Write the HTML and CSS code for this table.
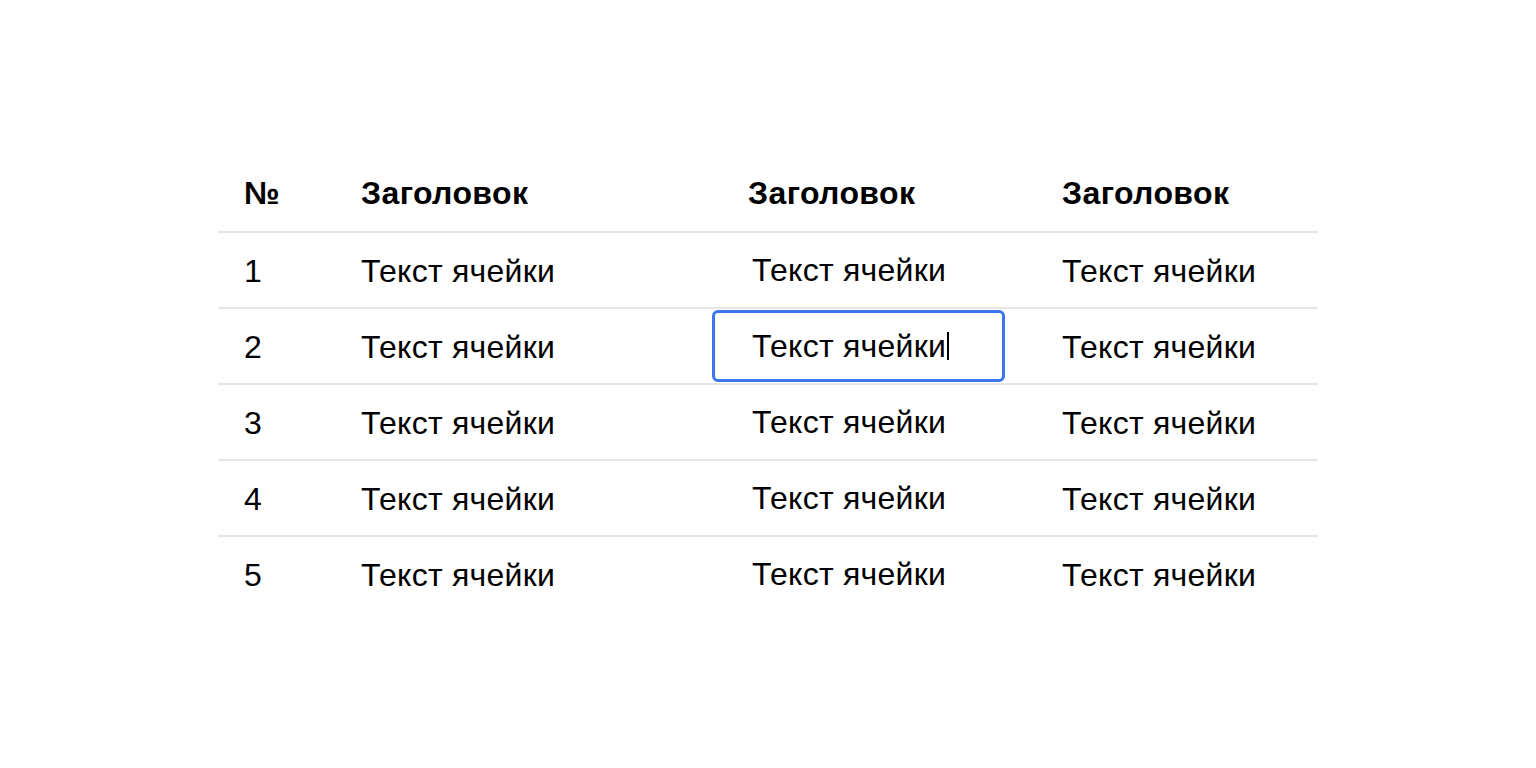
FILE: index.html
```html
<!DOCTYPE html>
<html lang="ru">
<head>
<meta charset="utf-8">
<title>Таблица</title>
<link rel="stylesheet" href="styles.css">
</head>
<body>
<main class="page">
  <table class="grid">
    <colgroup>
      <col class="c1"><col class="c2"><col class="c3"><col class="c4">
    </colgroup>
    <thead>
      <tr>
        <th>№</th><th>Заголовок</th><th>Заголовок</th><th>Заголовок</th>
      </tr>
    </thead>
    <tbody>
      <tr><td>1</td><td>Текст ячейки</td><td class="edit"><div class="box">Текст ячейки</div></td><td>Текст ячейки</td></tr>
      <tr><td>2</td><td>Текст ячейки</td><td class="edit"><div class="box focus">Текст ячейки<span class="caret"></span></div></td><td>Текст ячейки</td></tr>
      <tr><td>3</td><td>Текст ячейки</td><td class="edit"><div class="box">Текст ячейки</div></td><td>Текст ячейки</td></tr>
      <tr><td>4</td><td>Текст ячейки</td><td class="edit"><div class="box">Текст ячейки</div></td><td>Текст ячейки</td></tr>
      <tr><td>5</td><td>Текст ячейки</td><td class="edit"><div class="box">Текст ячейки</div></td><td>Текст ячейки</td></tr>
    </tbody>
  </table>
</main>
</body>
</html>
```

FILE: styles.css
```css
html, body {
  margin: 0;
  padding: 0;
  background: #ffffff;
}

body {
  font-family: "Liberation Sans", Arial, sans-serif;
  color: #000;
}

.page {
  padding: 156px 0 0 218px;
}

.grid {
  width: 1100px;
  border-collapse: collapse;
  table-layout: fixed;
  font-size: 32px;
  line-height: 1.15;
}

.c1 { width: 117px; }
.c2 { width: 387px; }
.c3 { width: 314px; }
.c4 { width: 282px; }

.grid th,
.grid td {
  padding: 0 0 0 26px;
  text-align: left;
  vertical-align: middle;
  white-space: nowrap;
}

.grid th {
  height: 75px;
  font-weight: 700;
  letter-spacing: 0.4px;
  border-bottom: 2px solid #e6e6e6;
}

.grid td {
  height: 71px;
  padding-top: 3px;
  letter-spacing: 0.25px;
}

.grid tbody tr + tr td {
  border-top: 2px solid #e6e6e6;
}

.grid td.edit {
  padding: 0;
}

.box {
  box-sizing: border-box;
  width: 293px;
  height: 72px;
  margin-left: -10px;
  padding-left: 37px;
  border: 3px solid transparent;
  border-radius: 6px;
  display: flex;
  align-items: center;
}

.box.focus {
  border-color: #3a76ee;
}

.caret {
  display: inline-block;
  width: 2px;
  height: 28px;
  background: #000;
  margin-left: 1px;
}
```
